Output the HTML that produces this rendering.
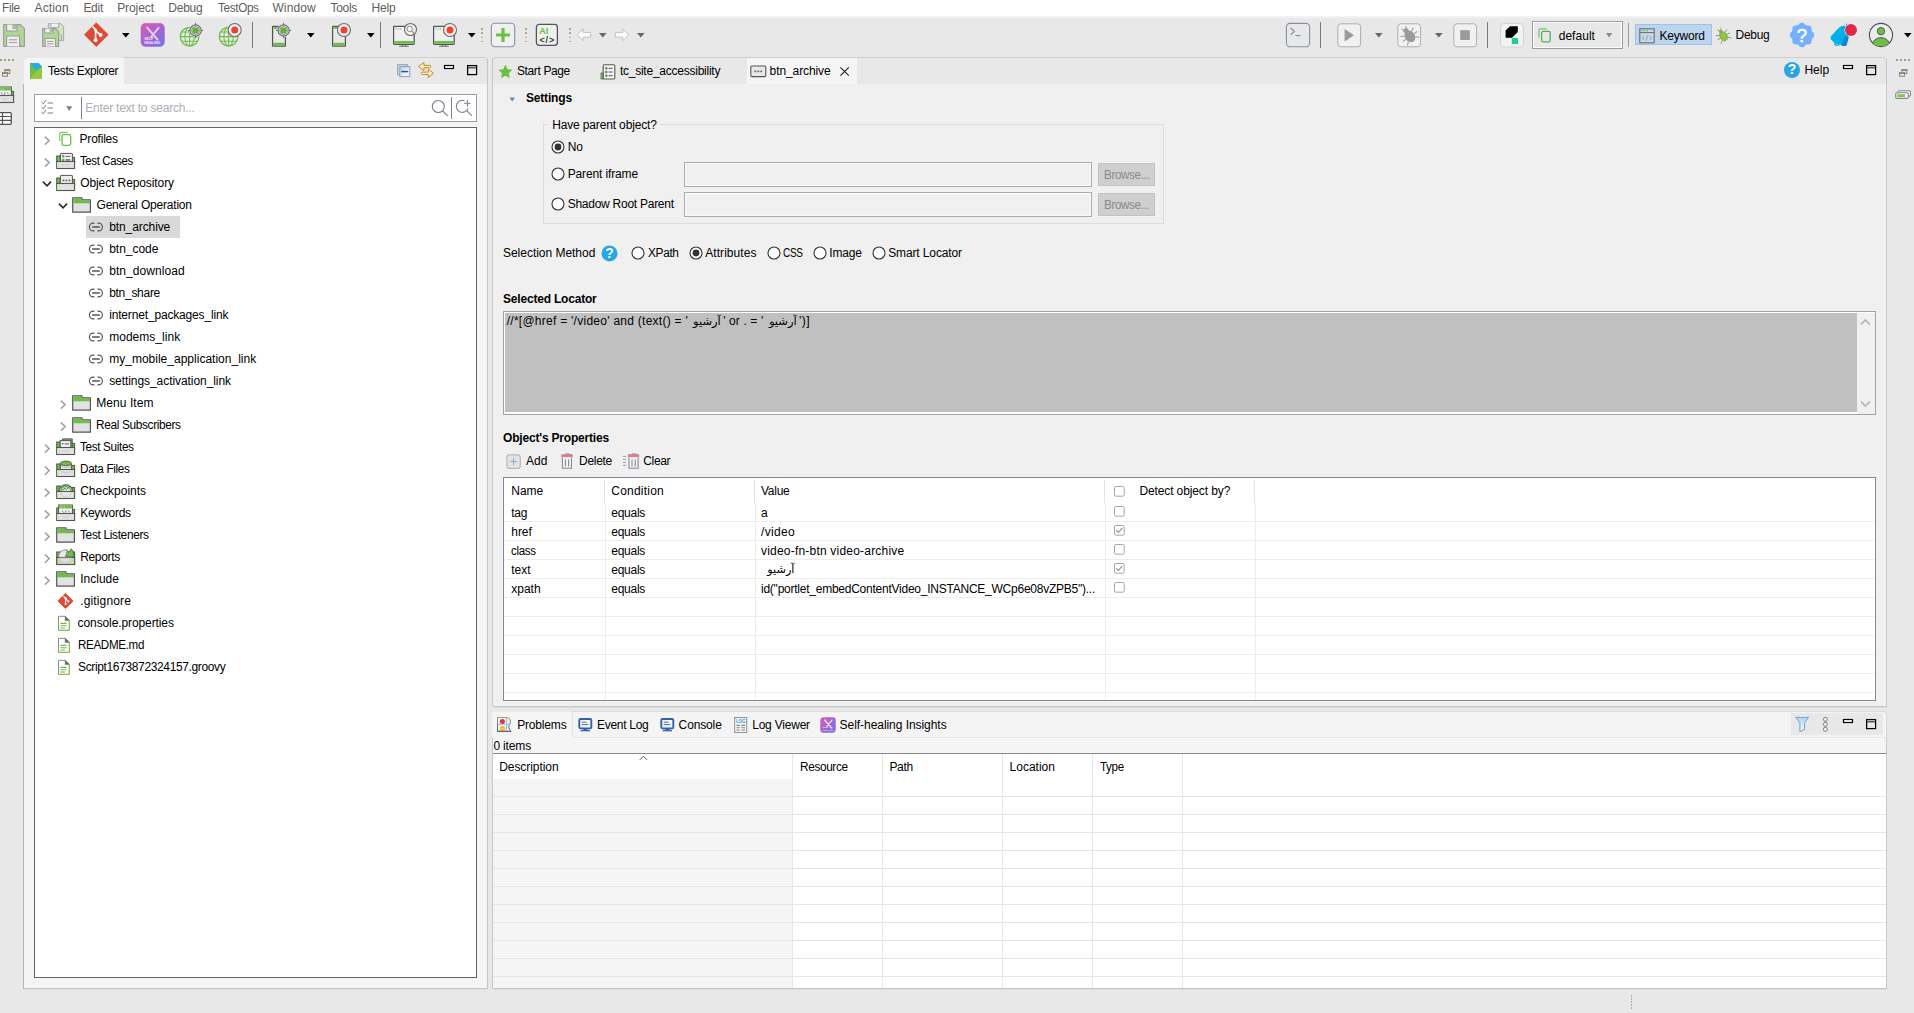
<!DOCTYPE html>
<html lang="en">
<head>
<meta charset="utf-8">
<title>Katalon Studio - btn_archive</title>
<style>
html,body{margin:0;padding:0}
body{width:1914px;height:1013px;overflow:hidden;position:relative;background:#e8e8e8;
 font-family:"Liberation Sans","DejaVu Sans",sans-serif;font-size:12px;color:#000}
nav,header,aside,main,section,.grp{position:absolute;left:0;top:0;width:0;height:0}
div,svg,span{position:absolute;box-sizing:border-box}
svg{overflow:visible}
.t{transform-origin:0 0;white-space:pre;line-height:14px;height:14px;font-size:12px;color:#000}
.b{font-weight:bold}
.m{color:#5e5e5e}
.ph{color:#b1abb5}
.dis{color:#8a8a8a}
.ar{font-family:"DejaVu Sans","Liberation Sans",sans-serif;font-size:11px}
svg text{font-family:"Liberation Sans",sans-serif}

</style>
</head>
<body>
<nav id="menubar" aria-label="Main menu">
<div style="left:0px;top:0px;width:1914px;height:16px;background:#fff"></div>
<div style="left:0px;top:16px;width:1914px;height:3px;background:linear-gradient(#f6f6f6,#e8e8e8)"></div>
<span id="t0" class="t m" style="left:2.3px;top:1px;letter-spacing:-0.35px;transform:scaleX(0.9864);">File</span>
<span id="t1" class="t m" style="left:34.5px;top:1px;letter-spacing:0.140px;">Action</span>
<span id="t2" class="t m" style="left:83.4px;top:1px;letter-spacing:-0.272px;">Edit</span>
<span id="t3" class="t m" style="left:117.2px;top:1px;letter-spacing:-0.080px;">Project</span>
<span id="t4" class="t m" style="left:168.3px;top:1px;letter-spacing:-0.235px;">Debug</span>
<span id="t5" class="t m" style="left:217.6px;top:1px;letter-spacing:-0.35px;transform:scaleX(0.9768);">TestOps</span>
<span id="t6" class="t m" style="left:272.4px;top:1px;letter-spacing:0.135px;">Window</span>
<span id="t7" class="t m" style="left:330.5px;top:1px;letter-spacing:-0.323px;">Tools</span>
<span id="t8" class="t m" style="left:371.4px;top:1px;letter-spacing:-0.097px;">Help</span>
</nav>
<header id="toolbar">
<svg style="left:3px;top:23px" width="22" height="24" viewBox="0 0 22 24" ><path d="M0.7 1.6 H17.4 L21.4 5.4 V23.4 H0.7 Z" fill="#b0d894" stroke="#9a9a9a" stroke-width="1.1" stroke-linejoin="round"/><path d="M3.6 1.6 V8 H14 V1.6" fill="#efefef" stroke="#9a9a9a" stroke-width="1.1"/><rect x="10" y="1.8" width="3" height="3.6" fill="#b0d894" stroke="#9a9a9a" stroke-width=".8"/><path d="M3.6 23.4 V13 H16.6 V23.4" fill="#efefef" stroke="#9a9a9a" stroke-width="1.1"/><path d="M6 16.8 H14 M6 19.6 H14" stroke="#9a9a9a" stroke-width="1"/></svg>
<svg style="left:42px;top:23px" width="22" height="24" viewBox="0 0 22 24" ><path d="M6.4 0.6 H18.6 L21.6 3.6 V17.6 H6.4 Z" fill="#cfe4c0" stroke="#a8a8a8" stroke-width="1" stroke-linejoin="round"/><path d="M8.8 0.6 V4.6 H16.6 V0.6" fill="#f0f0f0" stroke="#a8a8a8" stroke-width="1"/><path d="M17.8 12 H19.4 V17.4" fill="none" stroke="#a8a8a8" stroke-width="1"/><path d="M0.7 5.6 H13.4 L16.6 8.6 V23.4 H0.7 Z" fill="#b0d894" stroke="#9a9a9a" stroke-width="1.1" stroke-linejoin="round"/><path d="M2.8 5.6 V10 H11.2 V5.6" fill="#efefef" stroke="#9a9a9a" stroke-width="1"/><rect x="8.2" y="5.8" width="2.2" height="2.6" fill="#b0d894" stroke="#9a9a9a" stroke-width=".7"/><path d="M3.2 23.4 V15.4 H13.4 V23.4" fill="#efefef" stroke="#9a9a9a" stroke-width="1"/><path d="M5 18.4 H11.4 M5 20.8 H11.4" stroke="#9a9a9a" stroke-width="1"/></svg>
<svg style="left:84px;top:22px" width="25" height="25" viewBox="0 0 25 25" ><path d="M12.3 1.3 L23.8 12.7 L12.3 24.2 L0.8 12.7 Z" fill="#de4c36" stroke="#de4c36" stroke-width="1.2" stroke-linejoin="round"/><path d="M8.6 4.6 L11.6 7.8 V18.4 M11.8 8.6 L16.4 13" fill="none" stroke="#fff" stroke-width="1.6"/><circle cx="11.6" cy="18.2" r="1.9" fill="#fff"/><circle cx="16.6" cy="13" r="1.9" fill="#fff"/><circle cx="11.6" cy="8.2" r="1.4" fill="#fff"/></svg>
<svg style="left:121.6px;top:33px" width="8" height="5" viewBox="0 0 8 5" ><path d="M0 0 H7.6 L3.8 4.4 Z" fill="#000"/></svg>
<svg style="left:140px;top:23px" width="25" height="24" viewBox="0 0 25 24" ><defs><linearGradient id="shg" x1="0" y1="0" x2="1" y2="1"><stop offset="0" stop-color="#d660b0"/><stop offset=".55" stop-color="#a064d4"/><stop offset="1" stop-color="#6f74ec"/></linearGradient></defs><rect x="0.7" y="0.3" width="24" height="23.4" rx="4.6" fill="url(#shg)"/><clipPath id="shc"><rect x="0.7" y="0.3" width="24" height="23.4" rx="4.6"/></clipPath><path d="M0.7 6 Q8 -1 24.7 3.4 V0.3 H0.7 Z" fill="#e05aa0" opacity=".5" clip-path="url(#shc)"/><path d="M7 4.4 L17.6 16.6 M18.6 4.8 L11 14" stroke="#f0e4f8" stroke-width="1.9" fill="none" stroke-linecap="round" opacity=".85"/><text x="4.2" y="16.6" font-size="3.6" font-weight="bold" fill="#f3e3f8">SELF</text><text x="4.2" y="20.6" font-size="3.6" font-weight="bold" fill="#f3e3f8">HEALING</text></svg>
<svg style="left:179px;top:23px" width="24" height="24" viewBox="0 0 24 24" ><g fill="none" stroke="#6cbe45" stroke-width="1.05"><circle cx="10.6" cy="13.6" r="9.3" stroke-width="1.3"/><ellipse cx="10.6" cy="13.6" rx="4.7" ry="9.3"/><path d="M10.6 4.3 V22.9 M1.3 13.6 H19.9 M2.5 9 H18.7 M2.5 18.2 H18.7"/></g><circle cx="16.6" cy="7.5" r="6.6" fill="#e8e8e8"/><path d="M16.6 -0.09999999999999964 V15.1 M9.000000000000002 7.5 H24.200000000000003" stroke="#6b6b6b" stroke-width="1"/><circle cx="16.6" cy="7.5" r="5.6" fill="#e4e4e4" stroke="#6b6b6b" stroke-width="1.1"/><circle cx="16.6" cy="7.5" r="3.9" fill="none" stroke="#6b6b6b" stroke-width=".7"/><circle cx="16.6" cy="7.5" r="3.1" fill="#62b534"/></svg>
<svg style="left:218px;top:23px" width="24" height="24" viewBox="0 0 24 24" ><g fill="none" stroke="#6cbe45" stroke-width="1.05"><circle cx="10.6" cy="13.6" r="9.3" stroke-width="1.3"/><ellipse cx="10.6" cy="13.6" rx="4.7" ry="9.3"/><path d="M10.6 4.3 V22.9 M1.3 13.6 H19.9 M2.5 9 H18.7 M2.5 18.2 H18.7"/></g><circle cx="16.7" cy="7" r="6.5" fill="#f2f2f2" stroke="#6b6b6b" stroke-width="1.1"/><circle cx="16.7" cy="7" r="3.5" fill="#f43f33"/></svg>
<div style="left:252px;top:22px;width:1px;height:26px;background:#7a7a7a"></div>
<svg style="left:271px;top:23px" width="20" height="24" viewBox="0 0 20 24" ><rect x="1.6" y="3.3" width="12.8" height="19.8" rx="0.3" fill="#e9e9e9" stroke="#555" stroke-width="1.25"/><rect x="2.3" y="3.9" width="7" height="2" fill="#6cbe45"/><rect x="2.3" y="19.8" width="11.4" height="2.6" fill="#6cbe45"/><circle cx="12.6" cy="7.5" r="6.6" fill="#e8e8e8"/><path d="M12.6 -0.09999999999999964 V15.1 M5.0 7.5 H20.2" stroke="#6b6b6b" stroke-width="1"/><circle cx="12.6" cy="7.5" r="5.6" fill="#e4e4e4" stroke="#6b6b6b" stroke-width="1.1"/><circle cx="12.6" cy="7.5" r="3.9" fill="none" stroke="#6b6b6b" stroke-width=".7"/><circle cx="12.6" cy="7.5" r="3.1" fill="#62b534"/></svg>
<svg style="left:306.8px;top:33px" width="8" height="5" viewBox="0 0 8 5" ><path d="M0 0 H7.6 L3.8 4.4 Z" fill="#000"/></svg>
<svg style="left:331px;top:23px" width="20" height="24" viewBox="0 0 20 24" ><rect x="1.6" y="3.3" width="12.8" height="19.8" rx="0.3" fill="#e9e9e9" stroke="#555" stroke-width="1.25"/><rect x="2.3" y="3.9" width="7" height="2" fill="#6cbe45"/><rect x="2.3" y="19.8" width="11.4" height="2.6" fill="#6cbe45"/><circle cx="13" cy="7" r="6.5" fill="#f2f2f2" stroke="#6b6b6b" stroke-width="1.1"/><circle cx="13" cy="7" r="3.5" fill="#f43f33"/></svg>
<svg style="left:366.6px;top:33px" width="8" height="5" viewBox="0 0 8 5" ><path d="M0 0 H7.6 L3.8 4.4 Z" fill="#000"/></svg>
<div style="left:380px;top:22px;width:1px;height:26px;background:#7a7a7a"></div>
<svg style="left:392px;top:23px" width="24" height="24" viewBox="0 0 24 24" ><rect x="1.6" y="3.3" width="20.6" height="18" rx="0.5" fill="#f0f0f0" stroke="#555" stroke-width="1.25"/><rect x="2.3" y="18" width="19.2" height="2.7" fill="#6cbe45"/><rect x="3.4" y="5.4" width="1.2" height="1" fill="#6cbe45"/><rect x="5.6" y="5.4" width="1.2" height="1" fill="#6cbe45"/><rect x="7.8" y="5.4" width="1.2" height="1" fill="#6cbe45"/><path d="M10.4 21.6 V23 M13.4 21.6 V23 M7.2 23.3 H16.6" stroke="#666" stroke-width="1.1" fill="none"/><circle cx="18.5" cy="6.5" r="6" fill="#f2f2f2" stroke="#6b6b6b" stroke-width="1.1"/><circle cx="17.7" cy="5.9" r="2.7" fill="#fafafa" stroke="#8a8a8a" stroke-width="1"/><path d="M19.7 8.1 L22.1 10.5" stroke="#8a8a8a" stroke-width="1.1"/></svg>
<svg style="left:432px;top:23px" width="24" height="24" viewBox="0 0 24 24" ><rect x="1.6" y="3.3" width="20.6" height="18" rx="0.5" fill="#f0f0f0" stroke="#555" stroke-width="1.25"/><rect x="2.3" y="18" width="19.2" height="2.7" fill="#6cbe45"/><rect x="3.4" y="5.4" width="1.2" height="1" fill="#6cbe45"/><rect x="5.6" y="5.4" width="1.2" height="1" fill="#6cbe45"/><rect x="7.8" y="5.4" width="1.2" height="1" fill="#6cbe45"/><path d="M10.4 21.6 V23 M13.4 21.6 V23 M7.2 23.3 H16.6" stroke="#666" stroke-width="1.1" fill="none"/><circle cx="18" cy="7" r="6.5" fill="#f2f2f2" stroke="#6b6b6b" stroke-width="1.1"/><circle cx="18" cy="7" r="3.5" fill="#f43f33"/></svg>
<svg style="left:467.6px;top:33px" width="8" height="5" viewBox="0 0 8 5" ><path d="M0 0 H7.6 L3.8 4.4 Z" fill="#000"/></svg>
<div style="left:481px;top:28.4px;width:1.6px;height:1.8px;background:#b3a68b"></div>
<div style="left:481px;top:32.449999999999996px;width:1.6px;height:1.8px;background:#b3a68b"></div>
<div style="left:481px;top:36.5px;width:1.6px;height:1.8px;background:#b3a68b"></div>
<div style="left:481px;top:40.55px;width:1.6px;height:1.8px;background:#b3a68b"></div>
<svg style="left:490px;top:22px" width="26" height="26" viewBox="0 0 26 26" ><rect x="1.3" y="1.3" width="23.4" height="23.4" rx="3.6" fill="#f0f0f0" stroke="#8491a5" stroke-width="1.1"/><path d="M13 6 V20 M6 13 H20" stroke="#6cbe45" stroke-width="3.2"/></svg>
<div style="left:525px;top:28.4px;width:1.6px;height:1.8px;background:#b3a68b"></div>
<div style="left:525px;top:32.449999999999996px;width:1.6px;height:1.8px;background:#b3a68b"></div>
<div style="left:525px;top:36.5px;width:1.6px;height:1.8px;background:#b3a68b"></div>
<div style="left:525px;top:40.55px;width:1.6px;height:1.8px;background:#b3a68b"></div>
<svg style="left:535px;top:23px" width="24" height="24" viewBox="0 0 24 24" ><rect x="1.4" y="1.4" width="21" height="21" rx="2.8" fill="#efefef" stroke="#555" stroke-width="1.3"/><text x="4.2" y="10.6" font-size="9" font-weight="bold" fill="#6cbe45">AI</text><text x="4.4" y="19.9" font-size="9" font-weight="bold" fill="#3c3c3c" textLength="14.8" lengthAdjust="spacing">&lt;/&gt;</text></svg>
<div style="left:569px;top:28.4px;width:1.6px;height:1.8px;background:#b3a68b"></div>
<div style="left:569px;top:32.449999999999996px;width:1.6px;height:1.8px;background:#b3a68b"></div>
<div style="left:569px;top:36.5px;width:1.6px;height:1.8px;background:#b3a68b"></div>
<div style="left:569px;top:40.55px;width:1.6px;height:1.8px;background:#b3a68b"></div>
<svg style="left:576px;top:28px" width="16" height="14" viewBox="0 0 16 14" ><path d="M7.2 1 L1 6.8 L7.2 12.6 V9.2 H14.6 V4.4 H7.2 Z" fill="#fbfbfb" stroke="#c2c2c2" stroke-width="1" stroke-linejoin="round"/></svg>
<svg style="left:599px;top:33px" width="8" height="5" viewBox="0 0 8 5" ><path d="M0 0 H7.6 L3.8 4.4 Z" fill="#666"/></svg>
<svg style="left:614px;top:28px" width="16" height="14" viewBox="0 0 16 14" ><path d="M8.8 1 L15 6.8 L8.8 12.6 V9.2 H1.4 V4.4 H8.8 Z" fill="#fbfbfb" stroke="#c2c2c2" stroke-width="1" stroke-linejoin="round"/></svg>
<svg style="left:637px;top:33px" width="8" height="5" viewBox="0 0 8 5" ><path d="M0 0 H7.6 L3.8 4.4 Z" fill="#666"/></svg>
<svg style="left:1285px;top:22px" width="26" height="26" viewBox="0 0 26 26" ><rect x="1.4" y="1.4" width="23.2" height="23.4" rx="3.6" fill="none" stroke="#8792a6" stroke-width="1.1"/><path d="M5.6 6 L9.4 9.4 L5.6 12.8" fill="none" stroke="#7d8aa0" stroke-width="1.1"/><path d="M10.4 13.6 H15.4" stroke="#7d8aa0" stroke-width="1.1"/></svg>
<div style="left:1320px;top:22px;width:1px;height:26px;background:#7a7a7a"></div>
<svg style="left:1337px;top:23px" width="25" height="25" viewBox="0 0 25 25" ><rect x="0.8" y="0.8" width="22.8" height="23" rx="3" fill="#f1f1f1" stroke="#aeaeae" stroke-width="1"/><path d="M7.6 6 L17 12.3 L7.6 18.6 Z" fill="#9a9a9a"/></svg>
<svg style="left:1374.7px;top:33px" width="8" height="5" viewBox="0 0 8 5" ><path d="M0 0 H7.6 L3.8 4.4 Z" fill="#666"/></svg>
<svg style="left:1397px;top:23px" width="25" height="25" viewBox="0 0 25 25" ><rect x="0.8" y="0.8" width="22.8" height="23" rx="3" fill="#f1f1f1" stroke="#aeaeae" stroke-width="1"/><g transform="rotate(-35 12.2 12.4)"><ellipse cx="12.2" cy="13.6" rx="5" ry="6.3" fill="#9a9a9a"/><circle cx="12.2" cy="6.8" r="2.6" fill="#9a9a9a"/><path d="M7.8 10.4 L4.6 8.4 M7.2 13.8 H3.4 M7.8 17.2 L5 19.6 M16.6 10.4 L19.8 8.4 M17.2 13.8 H21 M16.6 17.2 L19.4 19.6 M10.8 5 L9.6 2.8 M13.6 5 L14.8 2.8" stroke="#9a9a9a" stroke-width="1" fill="none"/></g></svg>
<svg style="left:1434.6px;top:33px" width="8" height="5" viewBox="0 0 8 5" ><path d="M0 0 H7.6 L3.8 4.4 Z" fill="#666"/></svg>
<svg style="left:1453px;top:23px" width="25" height="25" viewBox="0 0 25 25" ><rect x="0.8" y="0.8" width="22.8" height="23" rx="3" fill="#f1f1f1" stroke="#aeaeae" stroke-width="1"/><rect x="7.2" y="7.2" width="9.6" height="9.8" fill="#9a9a9a"/></svg>
<div style="left:1487px;top:22px;width:1px;height:26px;background:#7a7a7a"></div>
<svg style="left:1500px;top:23px" width="24" height="25" viewBox="0 0 24 25" ><rect x="0.6" y="0.6" width="22.8" height="23.4" rx="3.4" fill="#f3f3f3" stroke="#d2d2d2" stroke-width="1"/><path d="M10 3.2 H17.8 V9 L12 14.8 H5.6 V7.6 Z" fill="#000"/><rect x="11.8" y="15" width="6.2" height="6" fill="#1ccf93"/></svg>
<div style="left:1532px;top:21px;width:91px;height:28px;background:#e8e8e8;border:1px solid #9d9d9d;box-shadow:inset 0 0 0 1px #fdfdfd"></div>
<svg style="left:1538px;top:28px" width="14" height="15" viewBox="0 0 14 15" ><path d="M1 9.6 V2.4 Q1 0.9 2.5 0.9 H8.6" fill="none" stroke="#6fbf73" stroke-width="1.2"/><rect x="3.6" y="3.4" width="8.6" height="10.4" rx="1.5" fill="#e8e8e8" stroke="#4fb257" stroke-width="1.3"/></svg>
<span id="t9" class="t" style="left:1558.7px;top:28.700000000000003px;letter-spacing:0.038px;">default</span>
<svg style="left:1606px;top:33px" width="7" height="5" viewBox="0 0 7 5" ><path d="M0 0 H6.2 L3.1 4.6 Z" fill="#858a92"/></svg>
<div style="left:1628px;top:23px;width:1px;height:24px;background:#9a9a9a"></div>
<div style="left:1635px;top:24px;width:77px;height:21px;background:#bcd5ec;border:1px solid #99c4ef"></div>
<svg style="left:1639px;top:28px" width="16" height="16" viewBox="0 0 16 16" ><rect x="0.8" y="0.8" width="14.4" height="14" fill="#c7d9ea" stroke="#6b6b6b" stroke-width="1.1"/><path d="M0.8 4.6 H15.2" stroke="#6b6b6b" stroke-width="1"/><rect x="2.2" y="2.2" width="1.6" height="1" fill="#6cbe45"/><rect x="4.8" y="2.2" width="1.6" height="1" fill="#6cbe45"/><rect x="7.4" y="2.2" width="1.6" height="1" fill="#6cbe45"/><path d="M5.4 7.8 L3.4 10 L5.4 12.2 M10.6 7.8 L12.6 10 L10.6 12.2 M8.8 7.4 L7.2 12.6" fill="none" stroke="#8d98a8" stroke-width=".9"/></svg>
<span id="t10" class="t" style="left:1659.5px;top:28.700000000000003px;letter-spacing:-0.212px;">Keyword</span>
<svg style="left:1715px;top:27px" width="16" height="16" viewBox="0 0 16 16" ><g transform="rotate(-30 8 8.4)"><ellipse cx="8" cy="9.4" rx="3.5" ry="4.9" fill="#8dc63f" stroke="#6f9a2e" stroke-width=".7"/><circle cx="8" cy="3.9" r="1.7" fill="#7fb437"/><path d="M4.6 6.8 L1.6 4.8 M4.4 9.6 H0.8 M4.8 12.4 L2 14.8 M11.4 6.8 L14.4 4.8 M11.6 9.6 H15.2 M11.2 12.4 L14 14.8 M7 2.6 L6 0.6 M9 2.6 L10 0.6" stroke="#8f9a86" stroke-width=".9" fill="none"/></g></svg>
<span id="t11" class="t" style="left:1735.6px;top:27.9px;letter-spacing:-0.295px;">Debug</span>
<svg style="left:1789px;top:22px" width="26" height="26" viewBox="0 0 26 26" ><circle cx="13" cy="13" r="10.7" fill="#74b0fb"/><circle cx="21.90" cy="13.00" r="3.3" fill="#74b0fb"/><circle cx="19.29" cy="19.29" r="3.3" fill="#74b0fb"/><circle cx="13.00" cy="21.90" r="3.3" fill="#74b0fb"/><circle cx="6.71" cy="19.29" r="3.3" fill="#74b0fb"/><circle cx="4.10" cy="13.00" r="3.3" fill="#74b0fb"/><circle cx="6.71" cy="6.71" r="3.3" fill="#74b0fb"/><circle cx="13.00" cy="4.10" r="3.3" fill="#74b0fb"/><circle cx="19.29" cy="6.71" r="3.3" fill="#74b0fb"/><text x="13" y="20.1" text-anchor="middle" font-size="18.5" fill="#fff" stroke="#fff" stroke-width=".55">?</text></svg>
<svg style="left:1829px;top:22px" width="30" height="26" viewBox="0 0 30 26" ><path d="M16.8 2.4 L17.7 1.2 L18.6 2.2 L17.8 4.2 Q20 8.4 19.6 15.2 L17.7 22.8 Q16.2 24.6 13.6 23.7 L11.2 22.5 Q9.2 24.9 6.5 23.7 Q4.3 22.5 5 20.3 L2.1 17.7 Q0.7 15.9 2.2 14 L10.2 5.6 Q13 3 16.6 4.1 Z" fill="#00aeea"/><path d="M15.7 13.8 L19.6 15.2 L17.7 22.8 Q16.2 24.6 13.6 23.7 L12.2 23 Z" fill="#0089cf"/><path d="M6.2 21.4 Q7.4 23.2 9.6 22.8" fill="none" stroke="#8fdcf8" stroke-width=".9"/><circle cx="22" cy="7.9" r="6.6" fill="#eef6f6"/><circle cx="22" cy="7.9" r="6" fill="#de2a48"/></svg>
<svg style="left:1868px;top:22px" width="26" height="26" viewBox="0 0 26 26" ><defs><clipPath id="avc"><circle cx="13" cy="13" r="11.2"/></clipPath></defs><circle cx="13" cy="13" r="11.6" fill="#ececec" stroke="#4e4e4e" stroke-width="1.1"/><circle cx="13" cy="9.2" r="3.7" fill="#6cbe45" stroke="#4e4e4e" stroke-width=".9"/><ellipse cx="13" cy="23" rx="8.6" ry="7.4" fill="#6cbe45" stroke="#4e4e4e" stroke-width=".9" clip-path="url(#avc)"/></svg>
<svg style="left:1904px;top:33px" width="8" height="5" viewBox="0 0 8 5" ><path d="M0 0 H7.6 L3.8 4.4 Z" fill="#000"/></svg>
</header>
<div id="trim" class="grp">
<div style="left:0px;top:59px;width:2px;height:2px;background:#a8997c"></div>
<div style="left:1896px;top:59px;width:2px;height:2px;background:#a8997c"></div>
<div style="left:4px;top:59px;width:2px;height:2px;background:#a8997c"></div>
<div style="left:1900px;top:59px;width:2px;height:2px;background:#a8997c"></div>
<div style="left:8px;top:59px;width:2px;height:2px;background:#a8997c"></div>
<div style="left:1904px;top:59px;width:2px;height:2px;background:#a8997c"></div>
<div style="left:12px;top:59px;width:2px;height:2px;background:#a8997c"></div>
<div style="left:1908px;top:59px;width:2px;height:2px;background:#a8997c"></div>
<svg style="left:2px;top:69px" width="10" height="9" viewBox="0 0 10 9" ><rect x="2.9" y="0.9" width="4.9" height="3.6" fill="none" stroke="#8f8576" stroke-width="1"/><rect x="2.4" y="0.2" width="5.9" height="1.7" fill="#8f8576"/><rect x="0.6" y="3.8" width="4.9" height="3.4" fill="#e8e8e8" stroke="#8f8576" stroke-width="1"/><rect x="0.1" y="3.2" width="5.9" height="1.7" fill="#8f8576"/></svg>
<svg style="left:1898.8px;top:69px" width="10" height="9" viewBox="0 0 10 9" ><rect x="2.9" y="0.9" width="4.9" height="3.6" fill="none" stroke="#8f8576" stroke-width="1"/><rect x="2.4" y="0.2" width="5.9" height="1.7" fill="#8f8576"/><rect x="0.6" y="3.8" width="4.9" height="3.4" fill="#e8e8e8" stroke="#8f8576" stroke-width="1"/><rect x="0.1" y="3.2" width="5.9" height="1.7" fill="#8f8576"/></svg>
<svg style="left:-5px;top:85.9px" width="20" height="18" viewBox="0 0 20 18" ><rect x="0.7" y="4" width="3.6" height="6" fill="#6cbe45" stroke="#555555" stroke-width="1"/><rect x="15.6" y="5.4" width="3" height="5" fill="#6cbe45" stroke="#555555" stroke-width="1"/><rect x="2.6" y="1" width="13.8" height="9" fill="#f4f4f4" stroke="#555555" stroke-width="1"/><rect x="3.1" y="1.5" width="12.8" height="3" fill="#6cbe45"/><rect x="4.4" y="2.6" width="1" height="0.9" fill="#d8f0c8"/><rect x="6.2" y="2.6" width="1" height="0.9" fill="#d8f0c8"/><rect x="8" y="2.6" width="1" height="0.9" fill="#d8f0c8"/><path d="M6 6.5 L7.4 8.4 M9.2 8.6 L10.2 6.4 M12.2 6.5 L13.6 8.4" stroke="#555555" stroke-width=".8" fill="none"/><rect x="0.7" y="9.5" width="17.9" height="7" fill="#e2e2e2" stroke="#555555" stroke-width="1.1"/><rect x="1.3" y="10.1" width="2.2" height="5.8" fill="#cfe6bf"/><rect x="16.6" y="10.1" width="1.4" height="5.8" fill="#cfe6bf"/><path d="M7 11.4 L8.6 13.6 M9.6 14.4 L10.4 11.6 M13 11.4 L11.4 13.6" stroke="#c8c8c8" stroke-width=".8" fill="none"/></svg>
<svg style="left:0px;top:112px" width="13" height="13" viewBox="0 0 13 13" ><rect x="-1" y="0.7" width="12.3" height="11.6" rx="1" fill="#fff" stroke="#555" stroke-width="1.3"/><path d="M-1 4.5 H11.3 M-1 8.4 H11.3 M2.5 0.7 V12.3" stroke="#555" stroke-width="1.2"/></svg>
<svg style="left:1895px;top:90px" width="17" height="10" viewBox="0 0 17 10" ><rect x="2.9" y="0.7" width="12.6" height="5.4" rx="1.2" fill="#efefef" stroke="#7e889b" stroke-width="1.1"/><rect x="0.7" y="2.8" width="12.6" height="5.6" rx="1.2" fill="#f6f6f6" stroke="#7e889b" stroke-width="1.1"/><rect x="2.2" y="4.2" width="7.8" height="2.8" fill="#8cc63e"/></svg>
<div style="left:1631px;top:995px;width:1px;height:2px;background:#b8ad98"></div>
<div style="left:1631px;top:998px;width:1px;height:2px;background:#b8ad98"></div>
<div style="left:1631px;top:1001px;width:1px;height:2px;background:#b8ad98"></div>
<div style="left:1631px;top:1004px;width:1px;height:2px;background:#b8ad98"></div>
<div style="left:1631px;top:1007px;width:1px;height:2px;background:#b8ad98"></div>
</div>
<aside id="tests-explorer">
<div style="left:24px;top:58px;width:464px;height:931px;background:#f5f5f5;border-radius:4px 4px 0 0"></div>
<div style="left:124px;top:57px;width:364px;height:27px;background:#e8e8e8;border-top:1px solid #cecece;border-right:1px solid #c6c6c6;border-radius:0 4px 0 0"></div>
<div style="left:23px;top:84px;width:1px;height:905px;background:#b4b4b4"></div>
<div style="left:487px;top:84px;width:1px;height:905px;background:#c6c6c6"></div>
<div style="left:24px;top:988px;width:464px;height:1px;background:#c6c6c6"></div>
<div style="left:25px;top:989px;width:463px;height:1px;background:#e0e0e0"></div>
<svg style="left:30px;top:63px" width="12" height="16" viewBox="0 0 12 16" ><path d="M0 0 H8.5 L12 3.5 V16 H0 Z" fill="#8dc63f"/><path d="M0 0 L6 8 L0 16 Z" fill="#6cbe45"/><path d="M0 0 H8.5 L12 3.5 L6 8 Z" fill="#27a9e1"/><path d="M0 16 L12 3.5 V16 Z" fill="#a0cc3a" opacity=".55"/></svg>
<span id="t12" class="t" style="left:48.3px;top:64px;letter-spacing:-0.35px;transform:scaleX(0.9869);">Tests Explorer</span>
<svg style="left:397px;top:64px" width="14" height="13" viewBox="0 0 14 13" ><defs><linearGradient id="cag" x1="0" y1="0" x2="1" y2="1"><stop offset="0" stop-color="#b4cfd6"/><stop offset=".7" stop-color="#eef4f6"/><stop offset="1" stop-color="#ffffff"/></linearGradient></defs><rect x="0.6" y="0.6" width="10" height="10" fill="#c9dbe0" stroke="#93a3bf" stroke-width="1"/><rect x="2.8" y="2.6" width="10" height="10" fill="url(#cag)" stroke="#8c9cba" stroke-width="1"/><rect x="4.2" y="6.9" width="7" height="1.4" fill="#1c5c9c"/></svg>
<svg style="left:418px;top:62px" width="16" height="16" viewBox="0 0 16 16" ><defs><linearGradient id="lag" x1="0" y1="0" x2="0" y2="1"><stop offset="0" stop-color="#fffbe6"/><stop offset="1" stop-color="#fbe29a"/></linearGradient></defs><path d="M5.9 0.5 L0.5 4.6 L5.9 8.7 V5.8 H11.6 Q12.8 5.8 12.8 4.6 Q12.8 3.4 11.6 3.4 H5.9 Z" fill="url(#lag)" stroke="#c58a26" stroke-width="1" stroke-linejoin="round"/><path d="M10.3 7.2 L15.6 11.3 L10.3 15.5 V12.5 H4.6 Q3.4 12.5 3.4 11.3 Q3.4 10.1 4.6 10.1 H10.3 Z" fill="url(#lag)" stroke="#c58a26" stroke-width="1" stroke-linejoin="round"/></svg>
<svg style="left:443px;top:64px" width="12" height="6" viewBox="0 0 12 6" ><rect x="1.5" y="1.5" width="9" height="3" fill="#fff" stroke="#000" stroke-width="1.2"/></svg>
<svg style="left:466px;top:64px" width="12" height="12" viewBox="0 0 12 12" ><rect x="1.6" y="1.6" width="9" height="9" fill="none" stroke="#000" stroke-width="1.25"/><rect x="1.6" y="3.4" width="9" height="0.9" fill="#000"/></svg>
<div style="left:34px;top:94px;width:443px;height:28px;background:#fff;border:1px solid #989ea7"></div>
<svg style="left:41px;top:100.4px" width="12" height="14" viewBox="0 0 12 14" ><path d="M0.3 2.0 L2.3 3.8 L5 0.0" fill="none" stroke="#7b838e" stroke-width="1"/><path d="M6.5 3.0 H12" stroke="#7b838e" stroke-width="1"/><path d="M0.3 7.0 L2.3 8.8 L5 5.0" fill="none" stroke="#7b838e" stroke-width="1"/><path d="M6.5 8.0 H12" stroke="#7b838e" stroke-width="1"/><path d="M0.3 12.0 L2.3 13.8 L5 10.0" fill="none" stroke="#7b838e" stroke-width="1"/><path d="M6.5 13.0 H12" stroke="#7b838e" stroke-width="1"/></svg>
<svg style="left:66px;top:106px" width="7" height="6" viewBox="0 0 7 6" ><path d="M0.2 0.3 H6.2 L3.2 5 Z" fill="#7a8088"/></svg>
<div style="left:81px;top:97px;width:1px;height:22px;background:#7d848e"></div>
<span id="t13" class="t ph" style="left:85.3px;top:101px;letter-spacing:-0.207px;">Enter text to search...</span>
<svg style="left:431px;top:100px" width="17" height="17" viewBox="0 0 17 17" ><circle cx="7.3" cy="6.5" r="6" fill="none" stroke="#7b838e" stroke-width="1.1"/><path d="M11.7 10.9 L16.6 15.8" stroke="#7b838e" stroke-width="1.2"/></svg>
<div style="left:451px;top:97px;width:1px;height:22px;background:#7d848e"></div>
<svg style="left:455px;top:99px" width="18" height="18" viewBox="0 0 18 18" ><path d="M9.6 1.8 A6 6 0 1 0 13 9.4" fill="none" stroke="#7b838e" stroke-width="1.1"/><path d="M11.8 11.6 L16.9 16.8" stroke="#7b838e" stroke-width="1.2"/><path d="M12.4 0.9 V7.7 M9 4.3 H15.8" stroke="#7b838e" stroke-width="1.1"/></svg>
<div style="left:34px;top:127px;width:443px;height:851px;background:#fff;border:1px solid #646464"></div>
<div style="left:86px;top:216px;width:94px;height:22px;background:#d9d9d9"></div>
<svg style="left:43.5px;top:136px" width="7" height="10" viewBox="0 0 7 10" ><path d="M0.9 0.6 L5.2 4.6 L0.9 8.6" fill="none" stroke="#a3a3a3" stroke-width="1.5"/></svg>
<svg style="left:58px;top:130px" width="20" height="18" viewBox="0 0 20 18" ><path d="M1.7 11 V3.8 Q1.7 2.4 3.1 2.4 H9.9" fill="none" stroke="#6cbe45" stroke-width="1.2" opacity=".8"/><rect x="4" y="4.7" width="8.7" height="10.6" rx="1.5" fill="#fff" stroke="#6cbe45" stroke-width="1.3"/></svg>
<span id="t14" class="t" style="left:79.6px;top:132px;letter-spacing:-0.227px;">Profiles</span>
<svg style="left:43.5px;top:158px" width="7" height="10" viewBox="0 0 7 10" ><path d="M0.9 0.6 L5.2 4.6 L0.9 8.6" fill="none" stroke="#a3a3a3" stroke-width="1.5"/></svg>
<svg style="left:56px;top:152px" width="20" height="18" viewBox="0 0 20 18" ><rect x="0.7" y="4" width="3.6" height="6" fill="#6cbe45" stroke="#555555" stroke-width="1"/><rect x="15.6" y="5.4" width="3" height="5" fill="#6cbe45" stroke="#555555" stroke-width="1"/><path d="M4.4 10 V1.9 Q4.4 1.4 5 1.4 H15.8 Q16.4 1.4 16.4 1.9 V10 Z" fill="#f0f0f0" stroke="#555555" stroke-width="1"/><circle cx="7.2" cy="4.3" r="1" fill="#6cbe45" stroke="#555555" stroke-width=".5"/><rect x="9.6" y="3.9" width="4.6" height="0.9" fill="#555555"/><circle cx="7.2" cy="8" r="1" fill="#6cbe45" stroke="#555555" stroke-width=".5"/><rect x="9.6" y="7.3" width="4.6" height="1.3" fill="#555555"/><rect x="0.7" y="9.5" width="17.9" height="7" fill="#e2e2e2" stroke="#555555" stroke-width="1.1"/><rect x="1.3" y="10.1" width="2.2" height="5.8" fill="#cfe6bf"/><rect x="16.6" y="10.1" width="1.4" height="5.8" fill="#cfe6bf"/><circle cx="7.2" cy="12.8" r="0.9" fill="none" stroke="#c4c4c4" stroke-width=".7"/><rect x="9.8" y="12.4" width="4.4" height="0.8" fill="#c8c8c8"/></svg>
<span id="t15" class="t" style="left:80.2px;top:154px;letter-spacing:-0.35px;transform:scaleX(0.9452);">Test Cases</span>
<svg style="left:41.5px;top:180px" width="10" height="8" viewBox="0 0 10 8" ><path d="M0.9 1.6 L5 5.9 L9.1 1.6" fill="none" stroke="#2b2b2b" stroke-width="1.6"/></svg>
<svg style="left:56px;top:174px" width="20" height="18" viewBox="0 0 20 18" ><rect x="0.7" y="4" width="3.6" height="6" fill="#6cbe45" stroke="#555555" stroke-width="1"/><rect x="15.6" y="5.4" width="3" height="5" fill="#6cbe45" stroke="#555555" stroke-width="1"/><path d="M4.4 10 V1.9 Q4.4 1.4 5 1.4 H15.8 Q16.4 1.4 16.4 1.9 V10 Z" fill="#eeeeee" stroke="#555555" stroke-width="1"/><rect x="6.4" y="5.6" width="1.9" height="1.7" fill="#6a6a6a"/><rect x="9.4" y="5.6" width="1.9" height="1.7" fill="#6a6a6a"/><rect x="12.4" y="5.6" width="1.9" height="1.7" fill="#6a6a6a"/><rect x="0.7" y="9.5" width="17.9" height="7" fill="#e2e2e2" stroke="#555555" stroke-width="1.1"/><rect x="1.3" y="10.1" width="2.2" height="5.8" fill="#cfe6bf"/><rect x="16.6" y="10.1" width="1.4" height="5.8" fill="#cfe6bf"/></svg>
<span id="t16" class="t" style="left:80.2px;top:176px;letter-spacing:-0.093px;">Object Repository</span>
<svg style="left:57.5px;top:202px" width="10" height="8" viewBox="0 0 10 8" ><path d="M0.9 1.6 L5 5.9 L9.1 1.6" fill="none" stroke="#2b2b2b" stroke-width="1.6"/></svg>
<svg style="left:72px;top:196px" width="20" height="18" viewBox="0 0 20 18" ><path d="M0.7 16.2 V1.8 H10 V3.8 H18.4 V16.2 Z" fill="#e2e2e2" stroke="#555555" stroke-width="1.2" stroke-linejoin="round"/><path d="M1.3 2.4 H9.4 V4.4 H17.8 V7.3 H1.3 Z" fill="#6cbe45"/></svg>
<span id="t17" class="t" style="left:96.5px;top:198px;letter-spacing:-0.202px;">General Operation</span>
<svg style="left:88px;top:218px" width="20" height="18" viewBox="0 0 20 18" ><path d="M6.5 5.1 H5.3 A3.9 3.9 0 0 0 5.3 12.9 H6.5" fill="none" stroke="#555555" stroke-width="1.2"/><path d="M9.4 5.1 H10.5 A3.9 3.9 0 0 1 10.5 12.9 H9.4" fill="none" stroke="#555555" stroke-width="1.2"/><rect x="4.1" y="8.2" width="7.8" height="1.6" rx=".5" fill="#555555"/></svg>
<span id="t18" class="t" style="left:109.2px;top:220px;letter-spacing:-0.095px;">btn_archive</span>
<svg style="left:88px;top:240px" width="20" height="18" viewBox="0 0 20 18" ><path d="M6.5 5.1 H5.3 A3.9 3.9 0 0 0 5.3 12.9 H6.5" fill="none" stroke="#555555" stroke-width="1.2"/><path d="M9.4 5.1 H10.5 A3.9 3.9 0 0 1 10.5 12.9 H9.4" fill="none" stroke="#555555" stroke-width="1.2"/><rect x="4.1" y="8.2" width="7.8" height="1.6" rx=".5" fill="#555555"/></svg>
<span id="t19" class="t" style="left:109.2px;top:242px;letter-spacing:-0.024px;">btn_code</span>
<svg style="left:88px;top:262px" width="20" height="18" viewBox="0 0 20 18" ><path d="M6.5 5.1 H5.3 A3.9 3.9 0 0 0 5.3 12.9 H6.5" fill="none" stroke="#555555" stroke-width="1.2"/><path d="M9.4 5.1 H10.5 A3.9 3.9 0 0 1 10.5 12.9 H9.4" fill="none" stroke="#555555" stroke-width="1.2"/><rect x="4.1" y="8.2" width="7.8" height="1.6" rx=".5" fill="#555555"/></svg>
<span id="t20" class="t" style="left:109.2px;top:264px;letter-spacing:0.064px;">btn_download</span>
<svg style="left:88px;top:284px" width="20" height="18" viewBox="0 0 20 18" ><path d="M6.5 5.1 H5.3 A3.9 3.9 0 0 0 5.3 12.9 H6.5" fill="none" stroke="#555555" stroke-width="1.2"/><path d="M9.4 5.1 H10.5 A3.9 3.9 0 0 1 10.5 12.9 H9.4" fill="none" stroke="#555555" stroke-width="1.2"/><rect x="4.1" y="8.2" width="7.8" height="1.6" rx=".5" fill="#555555"/></svg>
<span id="t21" class="t" style="left:109.2px;top:286px;letter-spacing:-0.286px;">btn_share</span>
<svg style="left:88px;top:306px" width="20" height="18" viewBox="0 0 20 18" ><path d="M6.5 5.1 H5.3 A3.9 3.9 0 0 0 5.3 12.9 H6.5" fill="none" stroke="#555555" stroke-width="1.2"/><path d="M9.4 5.1 H10.5 A3.9 3.9 0 0 1 10.5 12.9 H9.4" fill="none" stroke="#555555" stroke-width="1.2"/><rect x="4.1" y="8.2" width="7.8" height="1.6" rx=".5" fill="#555555"/></svg>
<span id="t22" class="t" style="left:109.2px;top:308px;letter-spacing:-0.166px;">internet_packages_link</span>
<svg style="left:88px;top:328px" width="20" height="18" viewBox="0 0 20 18" ><path d="M6.5 5.1 H5.3 A3.9 3.9 0 0 0 5.3 12.9 H6.5" fill="none" stroke="#555555" stroke-width="1.2"/><path d="M9.4 5.1 H10.5 A3.9 3.9 0 0 1 10.5 12.9 H9.4" fill="none" stroke="#555555" stroke-width="1.2"/><rect x="4.1" y="8.2" width="7.8" height="1.6" rx=".5" fill="#555555"/></svg>
<span id="t23" class="t" style="left:109.2px;top:330px;letter-spacing:0.027px;">modems_link</span>
<svg style="left:88px;top:350px" width="20" height="18" viewBox="0 0 20 18" ><path d="M6.5 5.1 H5.3 A3.9 3.9 0 0 0 5.3 12.9 H6.5" fill="none" stroke="#555555" stroke-width="1.2"/><path d="M9.4 5.1 H10.5 A3.9 3.9 0 0 1 10.5 12.9 H9.4" fill="none" stroke="#555555" stroke-width="1.2"/><rect x="4.1" y="8.2" width="7.8" height="1.6" rx=".5" fill="#555555"/></svg>
<span id="t24" class="t" style="left:109.2px;top:352px;letter-spacing:0.010px;">my_mobile_application_link</span>
<svg style="left:88px;top:372px" width="20" height="18" viewBox="0 0 20 18" ><path d="M6.5 5.1 H5.3 A3.9 3.9 0 0 0 5.3 12.9 H6.5" fill="none" stroke="#555555" stroke-width="1.2"/><path d="M9.4 5.1 H10.5 A3.9 3.9 0 0 1 10.5 12.9 H9.4" fill="none" stroke="#555555" stroke-width="1.2"/><rect x="4.1" y="8.2" width="7.8" height="1.6" rx=".5" fill="#555555"/></svg>
<span id="t25" class="t" style="left:109.2px;top:374px;letter-spacing:-0.067px;">settings_activation_link</span>
<svg style="left:59.5px;top:400px" width="7" height="10" viewBox="0 0 7 10" ><path d="M0.9 0.6 L5.2 4.6 L0.9 8.6" fill="none" stroke="#a3a3a3" stroke-width="1.5"/></svg>
<svg style="left:72px;top:394px" width="20" height="18" viewBox="0 0 20 18" ><path d="M0.7 16.2 V1.8 H10 V3.8 H18.4 V16.2 Z" fill="#e2e2e2" stroke="#555555" stroke-width="1.2" stroke-linejoin="round"/><path d="M1.3 2.4 H9.4 V4.4 H17.8 V7.3 H1.3 Z" fill="#6cbe45"/></svg>
<span id="t26" class="t" style="left:96.2px;top:396px;letter-spacing:0.077px;">Menu Item</span>
<svg style="left:59.5px;top:422px" width="7" height="10" viewBox="0 0 7 10" ><path d="M0.9 0.6 L5.2 4.6 L0.9 8.6" fill="none" stroke="#a3a3a3" stroke-width="1.5"/></svg>
<svg style="left:72px;top:416px" width="20" height="18" viewBox="0 0 20 18" ><path d="M0.7 16.2 V1.8 H10 V3.8 H18.4 V16.2 Z" fill="#e2e2e2" stroke="#555555" stroke-width="1.2" stroke-linejoin="round"/><path d="M1.3 2.4 H9.4 V4.4 H17.8 V7.3 H1.3 Z" fill="#6cbe45"/></svg>
<span id="t27" class="t" style="left:96.2px;top:418px;letter-spacing:-0.35px;transform:scaleX(0.9875);">Real Subscribers</span>
<svg style="left:43.5px;top:444px" width="7" height="10" viewBox="0 0 7 10" ><path d="M0.9 0.6 L5.2 4.6 L0.9 8.6" fill="none" stroke="#a3a3a3" stroke-width="1.5"/></svg>
<svg style="left:56px;top:438px" width="20" height="18" viewBox="0 0 20 18" ><rect x="0.7" y="4" width="3.6" height="6" fill="#6cbe45" stroke="#555555" stroke-width="1"/><rect x="15.6" y="5.4" width="3" height="5" fill="#6cbe45" stroke="#555555" stroke-width="1"/><path d="M6.4 3 V0.9 H16.2 V9.5" fill="#6cbe45" stroke="#555555" stroke-width="1"/><rect x="4.2" y="2.6" width="10.6" height="7" fill="#f2f2f2" stroke="#555555" stroke-width="1"/><rect x="6" y="5" width="1.4" height="1.4" fill="#555555"/><rect x="8.6" y="5.4" width="4.4" height="1" fill="#555555"/><rect x="0.7" y="9.5" width="17.9" height="7" fill="#e2e2e2" stroke="#555555" stroke-width="1.1"/><rect x="1.3" y="10.1" width="2.2" height="5.8" fill="#cfe6bf"/><rect x="16.6" y="10.1" width="1.4" height="5.8" fill="#cfe6bf"/><rect x="6" y="12.2" width="1.2" height="1.2" fill="#c4c4c4"/><rect x="8.6" y="12.5" width="4.4" height="0.8" fill="#c8c8c8"/></svg>
<span id="t28" class="t" style="left:80.2px;top:440px;letter-spacing:-0.35px;transform:scaleX(0.9772);">Test Suites</span>
<svg style="left:43.5px;top:466px" width="7" height="10" viewBox="0 0 7 10" ><path d="M0.9 0.6 L5.2 4.6 L0.9 8.6" fill="none" stroke="#a3a3a3" stroke-width="1.5"/></svg>
<svg style="left:56px;top:460px" width="20" height="18" viewBox="0 0 20 18" ><rect x="0.7" y="4" width="3.6" height="6" fill="#6cbe45" stroke="#555555" stroke-width="1"/><rect x="15.6" y="5.4" width="3" height="5" fill="#6cbe45" stroke="#555555" stroke-width="1"/><path d="M4.4 3.6 V9.6 H15.4 V3.6" fill="#ececec" stroke="#555555" stroke-width="1"/><path d="M4.6 6.2 Q9.9 9 15.2 6.2" fill="none" stroke="#b5b5b5" stroke-width=".9"/><ellipse cx="9.9" cy="3.4" rx="5.6" ry="2.3" fill="#6cbe45" stroke="#555555" stroke-width=".9"/><rect x="0.7" y="9.5" width="17.9" height="7" fill="#e2e2e2" stroke="#555555" stroke-width="1.1"/><rect x="1.3" y="10.1" width="2.2" height="5.8" fill="#cfe6bf"/><rect x="16.6" y="10.1" width="1.4" height="5.8" fill="#cfe6bf"/><path d="M4.6 11.6 Q9.9 14.4 15.2 11.6" fill="none" stroke="#c6c6c6" stroke-width=".9"/></svg>
<span id="t29" class="t" style="left:80.2px;top:462px;letter-spacing:-0.35px;transform:scaleX(0.9796);">Data Files</span>
<svg style="left:43.5px;top:488px" width="7" height="10" viewBox="0 0 7 10" ><path d="M0.9 0.6 L5.2 4.6 L0.9 8.6" fill="none" stroke="#a3a3a3" stroke-width="1.5"/></svg>
<svg style="left:56px;top:482px" width="20" height="18" viewBox="0 0 20 18" ><rect x="0.7" y="4" width="3.6" height="6" fill="#6cbe45" stroke="#555555" stroke-width="1"/><rect x="15.6" y="5.4" width="3" height="5" fill="#6cbe45" stroke="#555555" stroke-width="1"/><path d="M2.6 10 A7.3 7.3 0 0 1 17.2 10 Z" fill="#6cbe45" stroke="#555555" stroke-width="1"/><path d="M4.9 10 A5 5 0 0 1 14.9 10 Z" fill="#eeeeee" stroke="#8fa88a" stroke-width=".8"/><path d="M6.3 8.2 L9 6.4 L10.4 7.6 L13.4 4.9" fill="none" stroke="#555555" stroke-width=".9"/><rect x="0.7" y="9.5" width="17.9" height="7" fill="#e2e2e2" stroke="#555555" stroke-width="1.1"/><rect x="1.3" y="10.1" width="2.2" height="5.8" fill="#cfe6bf"/><rect x="16.6" y="10.1" width="1.4" height="5.8" fill="#cfe6bf"/><path d="M4.9 10.2 A5 5 0 0 0 14.9 10.2" fill="#e6e6e6" stroke="#c8c8c8" stroke-width=".8"/></svg>
<span id="t30" class="t" style="left:80.2px;top:484px;letter-spacing:-0.022px;">Checkpoints</span>
<svg style="left:43.5px;top:510px" width="7" height="10" viewBox="0 0 7 10" ><path d="M0.9 0.6 L5.2 4.6 L0.9 8.6" fill="none" stroke="#a3a3a3" stroke-width="1.5"/></svg>
<svg style="left:56px;top:504px" width="20" height="18" viewBox="0 0 20 18" ><rect x="0.7" y="4" width="3.6" height="6" fill="#6cbe45" stroke="#555555" stroke-width="1"/><rect x="15.6" y="5.4" width="3" height="5" fill="#6cbe45" stroke="#555555" stroke-width="1"/><rect x="2.6" y="1" width="13.8" height="9" fill="#f4f4f4" stroke="#555555" stroke-width="1"/><rect x="3.1" y="1.5" width="12.8" height="3" fill="#6cbe45"/><rect x="4.4" y="2.6" width="1" height="0.9" fill="#d8f0c8"/><rect x="6.2" y="2.6" width="1" height="0.9" fill="#d8f0c8"/><rect x="8" y="2.6" width="1" height="0.9" fill="#d8f0c8"/><path d="M6 6.5 L7.4 8.4 M9.2 8.6 L10.2 6.4 M12.2 6.5 L13.6 8.4" stroke="#555555" stroke-width=".8" fill="none"/><rect x="0.7" y="9.5" width="17.9" height="7" fill="#e2e2e2" stroke="#555555" stroke-width="1.1"/><rect x="1.3" y="10.1" width="2.2" height="5.8" fill="#cfe6bf"/><rect x="16.6" y="10.1" width="1.4" height="5.8" fill="#cfe6bf"/><path d="M7 11.4 L8.6 13.6 M9.6 14.4 L10.4 11.6 M13 11.4 L11.4 13.6" stroke="#c8c8c8" stroke-width=".8" fill="none"/></svg>
<span id="t31" class="t" style="left:80.2px;top:506px;letter-spacing:-0.261px;">Keywords</span>
<svg style="left:43.5px;top:532px" width="7" height="10" viewBox="0 0 7 10" ><path d="M0.9 0.6 L5.2 4.6 L0.9 8.6" fill="none" stroke="#a3a3a3" stroke-width="1.5"/></svg>
<svg style="left:56px;top:526px" width="20" height="18" viewBox="0 0 20 18" ><path d="M0.7 16.2 V1.8 H10 V3.8 H18.4 V16.2 Z" fill="#e2e2e2" stroke="#555555" stroke-width="1.2" stroke-linejoin="round"/><path d="M1.3 2.4 H9.4 V4.4 H17.8 V7.3 H1.3 Z" fill="#6cbe45"/></svg>
<span id="t32" class="t" style="left:80.2px;top:528px;letter-spacing:-0.35px;transform:scaleX(0.9935);">Test Listeners</span>
<svg style="left:43.5px;top:554px" width="7" height="10" viewBox="0 0 7 10" ><path d="M0.9 0.6 L5.2 4.6 L0.9 8.6" fill="none" stroke="#a3a3a3" stroke-width="1.5"/></svg>
<svg style="left:56px;top:548px" width="20" height="18" viewBox="0 0 20 18" ><rect x="0.7" y="4" width="17.9" height="12.5" fill="#6cbe45" stroke="#555555" stroke-width="1.1"/><path d="M10 1.6 L12.4 4.4 L15.4 0.8 L17.4 4.2 L18 9 H10 Z" fill="#6cbe45" stroke="#555555" stroke-width=".8"/><path d="M9.4 8.8 L11.4 2.2 A6.8 6.8 0 1 0 15.9 10.4 Z" fill="#e8e8e8" stroke="#8a8a8a" stroke-width=".9"/><rect x="0.7" y="9.5" width="17.9" height="7" fill="#cfe6bf" stroke="#555555" stroke-width="1.1" fill-opacity=".85"/><path d="M3 10 A6.6 6.6 0 0 0 15.8 10 Z" fill="#dedede" stroke="#bdbdbd" stroke-width=".7"/></svg>
<span id="t33" class="t" style="left:80.2px;top:550px;letter-spacing:-0.333px;">Reports</span>
<svg style="left:43.5px;top:576px" width="7" height="10" viewBox="0 0 7 10" ><path d="M0.9 0.6 L5.2 4.6 L0.9 8.6" fill="none" stroke="#a3a3a3" stroke-width="1.5"/></svg>
<svg style="left:56px;top:570px" width="20" height="18" viewBox="0 0 20 18" ><path d="M0.7 16.2 V1.8 H10 V3.8 H18.4 V16.2 Z" fill="#e2e2e2" stroke="#555555" stroke-width="1.2" stroke-linejoin="round"/><path d="M1.3 2.4 H9.4 V4.4 H17.8 V7.3 H1.3 Z" fill="#6cbe45"/></svg>
<span id="t34" class="t" style="left:80.2px;top:572px;letter-spacing:0.014px;">Include</span>
<svg style="left:56px;top:592px" width="20" height="18" viewBox="0 0 20 18" ><path d="M9.5 1.4 L17.1 9 L9.5 16.6 L1.9 9 Z" fill="#de4c36" stroke="#de4c36" stroke-width="1" stroke-linejoin="round"/><path d="M7.4 4.2 L9.6 6.4 V12 M9.6 6.6 L12.2 9.2" fill="none" stroke="#fff" stroke-width="1.1"/><circle cx="9.6" cy="6.4" r="1.1" fill="#fff"/><circle cx="9.6" cy="12" r="1.1" fill="#fff"/><circle cx="12.3" cy="9.3" r="1.1" fill="#fff"/></svg>
<span id="t35" class="t" style="left:80.2px;top:594px;letter-spacing:0.152px;">.gitignore</span>
<svg style="left:56px;top:614px" width="20" height="18" viewBox="0 0 20 18" ><path d="M2.5 16.3 V2.3 H9.2 L13.3 6.4 V16.3 Z" fill="#fff" stroke="#8c8c8c" stroke-width="1"/><path d="M13.4 6.6 V16.4 H2.6" fill="none" stroke="#8dc63f" stroke-width="1"/><path d="M9.2 2.3 L13.3 6.4 H9.2 Z" fill="#6b6b6b" stroke="#6b6b6b" stroke-width=".6"/><path d="M4.4 9.4 H10.6 M4.4 11.7 H10.6 M4.4 14 H9" stroke="#6cbe45" stroke-width="1.1"/></svg>
<span id="t36" class="t" style="left:77.6px;top:616px;letter-spacing:-0.103px;">console.properties</span>
<svg style="left:56px;top:636px" width="20" height="18" viewBox="0 0 20 18" ><path d="M2.5 16.3 V2.3 H9.2 L13.3 6.4 V16.3 Z" fill="#fff" stroke="#8c8c8c" stroke-width="1"/><path d="M13.4 6.6 V16.4 H2.6" fill="none" stroke="#8dc63f" stroke-width="1"/><path d="M9.2 2.3 L13.3 6.4 H9.2 Z" fill="#6b6b6b" stroke="#6b6b6b" stroke-width=".6"/><path d="M4.4 9.4 H10.6 M4.4 11.7 H10.6 M4.4 14 H9" stroke="#6cbe45" stroke-width="1.1"/></svg>
<span id="t37" class="t" style="left:77.6px;top:638px;letter-spacing:-0.35px;transform:scaleX(0.9678);">README.md</span>
<svg style="left:56px;top:658px" width="20" height="18" viewBox="0 0 20 18" ><path d="M2.5 16.3 V2.3 H9.2 L13.3 6.4 V16.3 Z" fill="#fff" stroke="#8c8c8c" stroke-width="1"/><path d="M13.4 6.6 V16.4 H2.6" fill="none" stroke="#8dc63f" stroke-width="1"/><path d="M9.2 2.3 L13.3 6.4 H9.2 Z" fill="#6b6b6b" stroke="#6b6b6b" stroke-width=".6"/><path d="M4.4 9.4 H10.6 M4.4 11.7 H10.6 M4.4 14 H9" stroke="#6cbe45" stroke-width="1.1"/></svg>
<span id="t38" class="t" style="left:77.6px;top:660px;letter-spacing:-0.35px;transform:scaleX(0.9980);">Script1673872324157.groovy</span>
</aside>
<main id="editor">
<div style="left:492px;top:58px;width:1395px;height:648px;background:#f0f0f0;border-radius:4px 4px 0 0"></div>
<div style="left:492px;top:57px;width:1395px;height:27px;background:#e8e8e8;border-top:1px solid #cecece;border-left:1px solid #c6c6c6;border-right:1px solid #c6c6c6;border-radius:4px 4px 0 0"></div>
<div style="left:747px;top:58px;width:110px;height:26px;background:#f5f5f5"></div>
<div style="left:492px;top:84px;width:1px;height:622px;background:#c8c8c8"></div>
<div style="left:1886px;top:84px;width:1px;height:622px;background:#c8c8c8"></div>
<div style="left:493px;top:706px;width:1394px;height:1px;background:#c6c6c6"></div>
<div style="left:494px;top:707px;width:1394px;height:1px;background:#dcdcdc"></div>
<svg style="left:497.6px;top:63.7px" width="15" height="15" viewBox="0 0 15 15" ><path d="M7.4 0.6 L9.5 5.2 L14.4 5.8 L10.8 9.2 L11.8 14.2 L7.4 11.7 L3 14.2 L4 9.2 L0.4 5.8 L5.3 5.2 Z" fill="#6cbe45"/></svg>
<span id="t39" class="t" style="left:516.8px;top:64px;letter-spacing:-0.35px;transform:scaleX(0.9943);">Start Page</span>
<svg style="left:600.4px;top:63.6px" width="16" height="16" viewBox="0 0 16 16" ><rect x="3.2" y="0.8" width="11.6" height="14.2" rx="1.2" fill="#f4f4f4" stroke="#555" stroke-width="1.1"/><rect x="1" y="9" width="2.2" height="6" fill="#6cbe45" stroke="#555" stroke-width=".7"/><circle cx="6.3" cy="4.3" r="1" fill="#6cbe45" stroke="#555" stroke-width=".6"/><path d="M8.6 4.3 H12.6" stroke="#555" stroke-width="1"/><circle cx="6.3" cy="8" r="1" fill="#6cbe45" stroke="#555" stroke-width=".6"/><path d="M8.6 8 H12.6" stroke="#555" stroke-width="1"/><circle cx="6.3" cy="11.7" r="1" fill="#6cbe45" stroke="#555" stroke-width=".6"/><path d="M8.6 11.7 H12.6" stroke="#555" stroke-width="1"/></svg>
<span id="t40" class="t" style="left:619.9px;top:64px;letter-spacing:-0.242px;">tc_site_accessibility</span>
<svg style="left:750px;top:64.7px" width="17" height="13" viewBox="0 0 17 13" ><rect x="0.8" y="1" width="15" height="10.6" rx="1.2" fill="#e9e9e9" stroke="#555" stroke-width="1.1"/><rect x="4.4" y="5.6" width="1.8" height="1.6" fill="#666"/><rect x="7.4" y="5.6" width="1.8" height="1.6" fill="#666"/><rect x="10.4" y="5.6" width="1.8" height="1.6" fill="#666"/></svg>
<span id="t41" class="t" style="left:769.6px;top:64px;letter-spacing:-0.095px;">btn_archive</span>
<svg style="left:839px;top:66px" width="12" height="11" viewBox="0 0 12 11" ><path d="M1.4 1.3 L9.8 9.6 M9.8 1.3 L1.4 9.6" stroke="#1a1a1a" stroke-width="1.05" fill="none"/></svg>
<svg style="left:1783px;top:61px" width="18" height="18" viewBox="0 0 18 18" ><circle cx="9" cy="9" r="8" fill="#27a6e5"/><text x="9" y="13.48" text-anchor="middle" font-size="14.0" font-weight="bold" fill="#fff">?</text></svg>
<span id="t42" class="t" style="left:1804.4px;top:63px;letter-spacing:0.028px;">Help</span>
<svg style="left:1842px;top:64px" width="12" height="6" viewBox="0 0 12 6" ><rect x="1.5" y="1.5" width="9" height="3" fill="#fff" stroke="#000" stroke-width="1.2"/></svg>
<svg style="left:1865px;top:64px" width="12" height="12" viewBox="0 0 12 12" ><rect x="1.6" y="1.6" width="9" height="9" fill="none" stroke="#000" stroke-width="1.25"/><rect x="1.6" y="3.4" width="9" height="0.9" fill="#000"/></svg>
<svg style="left:509px;top:97px" width="7" height="5" viewBox="0 0 7 5" ><path d="M0.4 0.4 H6 L3.2 4.6 Z" fill="#7d8590"/></svg>
<span id="t43" class="t b" style="left:525.9px;top:91.4px;letter-spacing:-0.155px;">Settings</span>
<div style="left:543px;top:124px;width:621px;height:100px;border:1px solid #dcdcdc"></div>
<div style="left:549px;top:118px;width:111px;height:14px;background:#f0f0f0"></div>
<span id="t44" class="t" style="left:552.2px;top:118px;letter-spacing:-0.148px;">Have parent object?</span>
<svg style="left:550.5px;top:139.8px" width="14" height="14" viewBox="0 0 14 14" ><circle cx="7" cy="7" r="6" fill="#fff" stroke="#333" stroke-width="1.1"/><circle cx="7" cy="7" r="3.4" fill="#333"/></svg>
<span id="t45" class="t" style="left:567.7px;top:140.3px;letter-spacing:-0.122px;">No</span>
<svg style="left:550.5px;top:166.5px" width="14" height="14" viewBox="0 0 14 14" ><circle cx="7" cy="7" r="6" fill="#fff" stroke="#333" stroke-width="1.1"/></svg>
<span id="t46" class="t" style="left:567.7px;top:167px;letter-spacing:-0.133px;">Parent iframe</span>
<svg style="left:550.5px;top:196.5px" width="14" height="14" viewBox="0 0 14 14" ><circle cx="7" cy="7" r="6" fill="#fff" stroke="#333" stroke-width="1.1"/></svg>
<span id="t47" class="t" style="left:567.7px;top:197px;letter-spacing:-0.258px;">Shadow Root Parent</span>
<div style="left:684px;top:162px;width:408px;height:25px;background:#f0f0f0;border:1px solid #a8acb2;box-shadow:inset 0 0 0 1px #fafafa"></div>
<div style="left:684px;top:192px;width:408px;height:25px;background:#f0f0f0;border:1px solid #a8acb2;box-shadow:inset 0 0 0 1px #fafafa"></div>
<div style="left:1098px;top:163px;width:57px;height:23px;background:#cfcfcf;border:1px solid #c2c2c2"></div>
<span id="t48" class="t dis" style="left:1104px;top:167.6px;letter-spacing:-0.35px;transform:scaleX(0.9666);">Browse...</span>
<div style="left:1098px;top:193px;width:57px;height:23px;background:#cfcfcf;border:1px solid #c2c2c2"></div>
<span id="t49" class="t dis" style="left:1104px;top:197.6px;letter-spacing:-0.35px;transform:scaleX(0.9666);">Browse...</span>
<span id="t50" class="t" style="left:503px;top:245.60000000000002px;letter-spacing:-0.027px;">Selection Method</span>
<svg style="left:600.6px;top:244.6px" width="17" height="17" viewBox="0 0 17 17" ><circle cx="8.5" cy="8.4" r="8" fill="#27a6e5"/><text x="8.5" y="12.88" text-anchor="middle" font-size="14.0" font-weight="bold" fill="#fff">?</text></svg>
<svg style="left:631.4px;top:245.5px" width="14" height="14" viewBox="0 0 14 14" ><circle cx="7" cy="7" r="6" fill="#fff" stroke="#333" stroke-width="1.1"/></svg>
<span id="t51" class="t" style="left:648px;top:246px;letter-spacing:-0.35px;transform:scaleX(0.9886);">XPath</span>
<svg style="left:688.5px;top:245.5px" width="14" height="14" viewBox="0 0 14 14" ><circle cx="7" cy="7" r="6" fill="#fff" stroke="#333" stroke-width="1.1"/><circle cx="7" cy="7" r="3.4" fill="#333"/></svg>
<span id="t52" class="t" style="left:705.2px;top:246px;letter-spacing:0.070px;">Attributes</span>
<svg style="left:766.7px;top:245.5px" width="14" height="14" viewBox="0 0 14 14" ><circle cx="7" cy="7" r="6" fill="#fff" stroke="#333" stroke-width="1.1"/></svg>
<span id="t53" class="t" style="left:783.4px;top:246px;letter-spacing:-0.35px;transform:scaleX(0.8292);">CSS</span>
<svg style="left:812.6px;top:245.5px" width="14" height="14" viewBox="0 0 14 14" ><circle cx="7" cy="7" r="6" fill="#fff" stroke="#333" stroke-width="1.1"/></svg>
<span id="t54" class="t" style="left:829.3px;top:246px;letter-spacing:-0.152px;">Image</span>
<svg style="left:871.6px;top:245.5px" width="14" height="14" viewBox="0 0 14 14" ><circle cx="7" cy="7" r="6" fill="#fff" stroke="#333" stroke-width="1.1"/></svg>
<span id="t55" class="t" style="left:888.2px;top:246px;letter-spacing:-0.121px;">Smart Locator</span>
<span id="t56" class="t b" style="left:503px;top:292px;letter-spacing:-0.194px;">Selected Locator</span>
<div style="left:503px;top:311px;width:1373px;height:104px;background:#f0f0f0;border:1px solid #a0a4aa"></div>
<div style="left:505px;top:313px;width:1352px;height:100px;background:#c0c0c0"></div>
<div style="left:504px;top:312px;width:1371px;height:1px;background:#fff"></div>
<div style="left:504px;top:412px;width:1354px;height:2px;background:#fff"></div>
<div style="left:504px;top:312px;width:1px;height:102px;background:#fff"></div>
<svg style="left:1860px;top:318px" width="11" height="8" viewBox="0 0 11 8" ><path d="M1 6.4 L5.4 2 L9.8 6.4" fill="none" stroke="#b4b4b4" stroke-width="1.6"/></svg>
<svg style="left:1860px;top:400px" width="11" height="8" viewBox="0 0 11 8" ><path d="M1 1.6 L5.4 6 L9.8 1.6" fill="none" stroke="#b4b4b4" stroke-width="1.6"/></svg>
<span id="t57" class="t" style="left:506.7px;top:314.2px;letter-spacing:0.264px;">//*[@href = '/video' and (text() = '</span>
<span id="t58" class="t ar" style="left:693.1px;top:314.2px;font-size:11.42px;">آرشیو</span>
<span id="t59" class="t" style="left:723.2px;top:314.2px;letter-spacing:0.126px;">' or . = '</span>
<span id="t60" class="t ar" style="left:768.9px;top:314.2px;font-size:11.54px;">آرشیو</span>
<span id="t61" class="t" style="left:799.3px;top:314.2px;letter-spacing:0.35px;transform:scaleX(1.0211);">')]</span>
<span id="t62" class="t b" style="left:503px;top:431px;letter-spacing:-0.188px;">Object's Properties</span>
<svg style="left:506px;top:453.9px" width="15" height="15" viewBox="0 0 15 15" ><rect x="0.9" y="0.9" width="13.4" height="13.4" rx="2.6" fill="#e4e4e4" stroke="#b6babf" stroke-width="1.2"/><path d="M7.6 3.8 V11.4 M3.8 7.6 H11.4" stroke="#a2a6ab" stroke-width="1"/></svg>
<span id="t63" class="t" style="left:526px;top:453.7px;letter-spacing:0.047px;">Add</span>
<svg style="left:560px;top:453px" width="14" height="16" viewBox="0 0 14 16" ><path d="M5.4 1.7 V0.9 H9.6 V1.7" fill="none" stroke="#8a9098" stroke-width="1"/><rect x="1.3" y="1.7" width="11.3" height="2.6" fill="#f27488"/><path d="M1.3 1.7 H12.6" stroke="#98878c" stroke-width=".7"/><path d="M2.4 4.4 V15.3 H11.5 V4.4" fill="#f3f3f3" stroke="#868c94" stroke-width="1.1"/><path d="M5.4 6.6 V13.4 M8.6 6.6 V13.4" stroke="#868c94" stroke-width="1.1"/></svg>
<span id="t64" class="t" style="left:579px;top:453.7px;letter-spacing:-0.281px;">Delete</span>
<svg style="left:622px;top:453px" width="18" height="16" viewBox="0 0 18 16" ><path d="M0.9 3.4 H4.2 M0.9 6.4 H4.2 M0.9 9.4 H4.2 M0.9 12.4 H4.2" stroke="#9ca2aa" stroke-width="1"/><g transform="translate(4.6,0)"><path d="M5.4 1.7 V0.9 H9.6 V1.7" fill="none" stroke="#8a9098" stroke-width="1"/><rect x="1.3" y="1.7" width="11.3" height="2.6" fill="#f27488"/><path d="M1.3 1.7 H12.6" stroke="#98878c" stroke-width=".7"/><path d="M2.4 4.4 V15.3 H11.5 V4.4" fill="#f3f3f3" stroke="#868c94" stroke-width="1.1"/><path d="M5.4 6.6 V13.4 M8.6 6.6 V13.4" stroke="#868c94" stroke-width="1.1"/></g></svg>
<span id="t65" class="t" style="left:643.2px;top:453.7px;letter-spacing:-0.318px;">Clear</span>
<div style="left:503px;top:477px;width:1373px;height:224px;background:#fff;border:1px solid #828790"></div>
<div style="left:605px;top:478px;width:1px;height:222px;background:#ededed"></div>
<div style="left:605px;top:478px;width:1px;height:25px;background:#fff"></div>
<div style="left:604px;top:480px;width:1px;height:23px;background:#e2e2e2"></div>
<div style="left:755px;top:478px;width:1px;height:222px;background:#ededed"></div>
<div style="left:755px;top:478px;width:1px;height:25px;background:#fff"></div>
<div style="left:754px;top:480px;width:1px;height:23px;background:#e2e2e2"></div>
<div style="left:1105px;top:478px;width:1px;height:222px;background:#ededed"></div>
<div style="left:1105px;top:478px;width:1px;height:25px;background:#fff"></div>
<div style="left:1104px;top:480px;width:1px;height:23px;background:#e2e2e2"></div>
<div style="left:1255px;top:478px;width:1px;height:222px;background:#ededed"></div>
<div style="left:1255px;top:478px;width:1px;height:25px;background:#fff"></div>
<div style="left:1254px;top:480px;width:1px;height:23px;background:#e2e2e2"></div>
<div style="left:504px;top:521px;width:1371px;height:1px;background:#ededed"></div>
<div style="left:504px;top:540px;width:1371px;height:1px;background:#ededed"></div>
<div style="left:504px;top:559px;width:1371px;height:1px;background:#ededed"></div>
<div style="left:504px;top:578px;width:1371px;height:1px;background:#ededed"></div>
<div style="left:504px;top:597px;width:1371px;height:1px;background:#ededed"></div>
<div style="left:504px;top:616px;width:1371px;height:1px;background:#ededed"></div>
<div style="left:504px;top:635px;width:1371px;height:1px;background:#ededed"></div>
<div style="left:504px;top:654px;width:1371px;height:1px;background:#ededed"></div>
<div style="left:504px;top:673px;width:1371px;height:1px;background:#ededed"></div>
<div style="left:504px;top:692px;width:1371px;height:1px;background:#ededed"></div>
<span id="t66" class="t" style="left:511.3px;top:483.6px;letter-spacing:-0.079px;">Name</span>
<span id="t67" class="t" style="left:611.3px;top:483.6px;letter-spacing:0.222px;">Condition</span>
<span id="t68" class="t" style="left:761px;top:483.6px;letter-spacing:-0.263px;">Value</span>
<span id="t69" class="t" style="left:1139.4px;top:483.6px;letter-spacing:-0.113px;">Detect object by?</span>
<svg style="left:1113.6px;top:485.5px" width="11" height="11" viewBox="0 0 11 11" ><rect x="0.5" y="0.5" width="9.7" height="9.7" rx="1.4" fill="#fff" stroke="#a3a7ad" stroke-width="1"/></svg>
<span id="t70" class="t" style="left:511.3px;top:505.6px;letter-spacing:-0.262px;">tag</span>
<span id="t71" class="t" style="left:611.3px;top:505.6px;letter-spacing:-0.262px;">equals</span>
<span id="t72" class="t" style="left:761px;top:505.6px;letter-spacing:-0.188px;">a</span>
<svg style="left:1113.6px;top:505.5px" width="11" height="11" viewBox="0 0 11 11" ><rect x="0.5" y="0.5" width="9.7" height="9.7" rx="1.4" fill="#fff" stroke="#a3a7ad" stroke-width="1"/></svg>
<span id="t73" class="t" style="left:511.3px;top:524.6px;letter-spacing:-0.047px;">href</span>
<span id="t74" class="t" style="left:611.3px;top:524.6px;letter-spacing:-0.262px;">equals</span>
<span id="t75" class="t" style="left:761px;top:524.6px;letter-spacing:0.311px;">/video</span>
<svg style="left:1113.6px;top:524.5px" width="11" height="11" viewBox="0 0 11 11" ><rect x="0.5" y="0.5" width="9.7" height="9.7" rx="1.4" fill="#fff" stroke="#a3a7ad" stroke-width="1"/><path d="M2.3 5.4 L4.4 7.5 L8.3 2.9" fill="none" stroke="#8c8c8c" stroke-width="1.1"/></svg>
<span id="t76" class="t" style="left:511.3px;top:543.6px;letter-spacing:-0.35px;transform:scaleX(0.9651);">class</span>
<span id="t77" class="t" style="left:611.3px;top:543.6px;letter-spacing:-0.262px;">equals</span>
<span id="t78" class="t" style="left:761px;top:543.6px;letter-spacing:0.205px;">video-fn-btn video-archive</span>
<svg style="left:1113.6px;top:543.5px" width="11" height="11" viewBox="0 0 11 11" ><rect x="0.5" y="0.5" width="9.7" height="9.7" rx="1.4" fill="#fff" stroke="#a3a7ad" stroke-width="1"/></svg>
<span id="t79" class="t" style="left:511.3px;top:562.6px;letter-spacing:-0.011px;">text</span>
<span id="t80" class="t" style="left:611.3px;top:562.6px;letter-spacing:-0.262px;">equals</span>
<span id="t81" class="t ar" style="left:767.3px;top:562.6px;font-size:11.25px;">آرشیو</span>
<svg style="left:1113.6px;top:562.5px" width="11" height="11" viewBox="0 0 11 11" ><rect x="0.5" y="0.5" width="9.7" height="9.7" rx="1.4" fill="#fff" stroke="#a3a7ad" stroke-width="1"/><path d="M2.3 5.4 L4.4 7.5 L8.3 2.9" fill="none" stroke="#8c8c8c" stroke-width="1.1"/></svg>
<span id="t82" class="t" style="left:511.3px;top:581.6px;letter-spacing:-0.012px;">xpath</span>
<span id="t83" class="t" style="left:611.3px;top:581.6px;letter-spacing:-0.262px;">equals</span>
<span id="t84" class="t" style="left:761px;top:581.6px;letter-spacing:-0.242px;">id("portlet_embedContentVideo_INSTANCE_WCp6e08vZPB5")...</span>
<svg style="left:1113.6px;top:581.5px" width="11" height="11" viewBox="0 0 11 11" ><rect x="0.5" y="0.5" width="9.7" height="9.7" rx="1.4" fill="#fff" stroke="#a3a7ad" stroke-width="1"/></svg>
</main>
<section id="problems-view">
<div style="left:492px;top:711px;width:1395px;height:278px;background:#f5f5f5;border-radius:4px 4px 0 0"></div>
<div style="left:572px;top:711px;width:1315px;height:27px;background:#f4f4f4;border-top:1px solid #dadada;border-left:1px solid #e4e4e4;border-bottom:1px solid #e6e6e6;border-right:1px solid #d8d8d8;border-radius:0 4px 0 0"></div>
<div style="left:492px;top:711px;width:81px;height:1px;background:#e9e9e9"></div>
<div style="left:1791px;top:713px;width:92px;height:22px;background:#e8e8e8"></div>
<div style="left:492px;top:738px;width:1px;height:251px;background:#c8c8c8"></div>
<div style="left:1886px;top:738px;width:1px;height:251px;background:#c8c8c8"></div>
<div style="left:493px;top:988px;width:1394px;height:1px;background:#c6c6c6"></div>
<div style="left:494px;top:989px;width:1394px;height:1px;background:#dcdcdc"></div>
<svg style="left:496px;top:716px" width="16" height="16" viewBox="0 0 16 16" ><defs><linearGradient id="prb" x1="0" y1="0" x2="0" y2="1"><stop offset="0" stop-color="#a49c62"/><stop offset="1" stop-color="#55638c"/></linearGradient><linearGradient id="pro" x1="0" y1="0" x2="0" y2="1"><stop offset="0" stop-color="#f59a1c"/><stop offset=".55" stop-color="#fdd23c"/><stop offset="1" stop-color="#f29018"/></linearGradient></defs><path d="M1.5 1.5 H11.6 Q15.4 3.2 14.4 6.4 Q13 9.8 12.7 11.2 Q13.2 13.6 15 15.4 H1.5 Z" fill="#e2f3fc" stroke="url(#prb)" stroke-width="1"/><path d="M2 8.3 H13.2 M10.5 2 V15" stroke="#a9b9e2" stroke-width="1"/><path d="M1.5 15.4 H15" stroke="#55638c" stroke-width="1.1"/><circle cx="6.4" cy="5.4" r="2.5" fill="#e8323c"/><path d="M3.9 15 V12.6 Q3.9 10.2 6.5 10.2 Q9.1 10.2 9.1 12.6 V15 Z" fill="url(#pro)"/></svg>
<span id="t85" class="t" style="left:517.2px;top:718.4px;letter-spacing:-0.173px;">Problems</span>
<svg style="left:578px;top:718px" width="15" height="14" viewBox="0 0 15 14" ><rect x="1.3" y="1" width="12" height="9.4" rx="1.2" fill="#f2f6fb" stroke="#3560ac" stroke-width="1.9"/><path d="M3.8 4.2 H8.6 M3.8 6.6 H10.4" stroke="#5a6f98" stroke-width="1"/><path d="M5.4 10.8 H9.2 V12 H5.4 Z" fill="#3a63ad"/><path d="M2.6 12.6 H12 " stroke="#3a63ad" stroke-width="1.4"/></svg>
<span id="t86" class="t" style="left:597px;top:718.4px;letter-spacing:-0.283px;">Event Log</span>
<svg style="left:660px;top:718px" width="15" height="14" viewBox="0 0 15 14" ><rect x="1.3" y="1" width="12" height="9.4" rx="1.2" fill="#f2f6fb" stroke="#3560ac" stroke-width="1.9"/><path d="M3.8 4.2 H8.6 M3.8 6.6 H10.4" stroke="#5a6f98" stroke-width="1"/><path d="M5.4 10.8 H9.2 V12 H5.4 Z" fill="#3a63ad"/><path d="M2.6 12.6 H12 " stroke="#3a63ad" stroke-width="1.4"/></svg>
<span id="t87" class="t" style="left:678.6px;top:718.4px;letter-spacing:-0.133px;">Console</span>
<svg style="left:734px;top:717px" width="14" height="16" viewBox="0 0 14 16" ><rect x="0.7" y="0.6" width="12" height="14.8" fill="#fcfcfc" stroke="#8a8a8a" stroke-width="1"/><text x="1.9" y="5.9" font-size="4.9" font-weight="bold" fill="#1a9be8" textLength="9.6" lengthAdjust="spacingAndGlyphs">LOG</text><path d="M2.4 8.4 H5.8 M7.4 8.4 H11 M2.4 10.7 H5.8 M7.4 10.7 H11 M2.4 13 H5.8 M7.4 13 H11" stroke="#7d7d7d" stroke-width="1.1"/></svg>
<span id="t88" class="t" style="left:752.2px;top:718.4px;letter-spacing:-0.213px;">Log Viewer</span>
<svg style="left:820px;top:717px" width="16" height="16" viewBox="0 0 16 16" ><defs><linearGradient id="shs" x1="0" y1="0" x2="1" y2="1"><stop offset="0" stop-color="#d660b0"/><stop offset=".55" stop-color="#a064d4"/><stop offset="1" stop-color="#6f74ec"/></linearGradient></defs><rect x="0.3" y="0.2" width="15.4" height="15.6" rx="3.2" fill="url(#shs)"/><path d="M4.6 3 L11.8 11 M12 3.2 L6.8 9.4" stroke="#f0e2f8" stroke-width="1.3" fill="none" stroke-linecap="round"/><text x="2.6" y="10.9" font-size="2.5" font-weight="bold" fill="#f3e3f8">SELF</text><text x="2.6" y="13.6" font-size="2.5" font-weight="bold" fill="#f3e3f8">HEALING</text></svg>
<span id="t89" class="t" style="left:839.6px;top:718.4px;letter-spacing:-0.051px;">Self-healing Insights</span>
<svg style="left:1794.6px;top:716px" width="16" height="17" viewBox="0 0 16 17" ><defs><linearGradient id="flt" x1="0" y1="0" x2="0" y2="1"><stop offset="0" stop-color="#a9d4f7"/><stop offset=".5" stop-color="#d9ecfb"/><stop offset="1" stop-color="#eef6fd"/></linearGradient></defs><path d="M0.7 1.2 Q7 2 13.5 1.2 L9.5 6.8 V13.4 L4.9 15.8 V6.8 Z" fill="url(#flt)" stroke="#7c9fd2" stroke-width="1" stroke-linejoin="round"/></svg>
<svg style="left:1821px;top:716px" width="9" height="17" viewBox="0 0 9 17" ><circle cx="4.4" cy="3.3" r="2" fill="#f4f4f4" stroke="#6e6e6e" stroke-width=".9"/><circle cx="4.4" cy="8.3" r="2" fill="#f4f4f4" stroke="#6e6e6e" stroke-width=".9"/><circle cx="4.4" cy="13.3" r="2" fill="#f4f4f4" stroke="#6e6e6e" stroke-width=".9"/></svg>
<svg style="left:1842px;top:718px" width="12" height="6" viewBox="0 0 12 6" ><rect x="1.5" y="1.5" width="9" height="3" fill="#fff" stroke="#000" stroke-width="1.2"/></svg>
<svg style="left:1865px;top:718px" width="12" height="12" viewBox="0 0 12 12" ><rect x="1.6" y="1.6" width="9" height="9" fill="none" stroke="#000" stroke-width="1.25"/><rect x="1.6" y="3.4" width="9" height="0.9" fill="#000"/></svg>
<span id="t90" class="t" style="left:493.4px;top:739.2px;letter-spacing:-0.155px;">0 items</span>
<div style="left:493px;top:753px;width:1393px;height:235px;background:#fff;border-top:1px solid #8a8a8a"></div>
<div style="left:493px;top:779px;width:299px;height:209px;background:#f5f5f5"></div>
<div style="left:493px;top:796px;width:1393px;height:1px;background:#e6e6e6"></div>
<div style="left:493px;top:814px;width:1393px;height:1px;background:#e6e6e6"></div>
<div style="left:493px;top:832px;width:1393px;height:1px;background:#e6e6e6"></div>
<div style="left:493px;top:850px;width:1393px;height:1px;background:#e6e6e6"></div>
<div style="left:493px;top:868px;width:1393px;height:1px;background:#e6e6e6"></div>
<div style="left:493px;top:886px;width:1393px;height:1px;background:#e6e6e6"></div>
<div style="left:493px;top:904px;width:1393px;height:1px;background:#e6e6e6"></div>
<div style="left:493px;top:922px;width:1393px;height:1px;background:#e6e6e6"></div>
<div style="left:493px;top:940px;width:1393px;height:1px;background:#e6e6e6"></div>
<div style="left:493px;top:958px;width:1393px;height:1px;background:#e6e6e6"></div>
<div style="left:493px;top:976px;width:1393px;height:1px;background:#e6e6e6"></div>
<div style="left:493px;top:994px;width:1393px;height:1px;background:#e6e6e6"></div>
<div style="left:792px;top:754px;width:1px;height:234px;background:#e8e8e8"></div>
<div style="left:882px;top:754px;width:1px;height:234px;background:#e8e8e8"></div>
<div style="left:1002px;top:754px;width:1px;height:234px;background:#e8e8e8"></div>
<div style="left:1092px;top:754px;width:1px;height:234px;background:#e8e8e8"></div>
<div style="left:1182px;top:754px;width:1px;height:234px;background:#e8e8e8"></div>
<span id="t91" class="t" style="left:499.2px;top:760.2px;letter-spacing:-0.057px;">Description</span>
<span id="t92" class="t" style="left:799.5px;top:760.2px;letter-spacing:-0.35px;transform:scaleX(0.9823);">Resource</span>
<span id="t93" class="t" style="left:889.4px;top:760.2px;letter-spacing:-0.322px;">Path</span>
<span id="t94" class="t" style="left:1009.5px;top:760.2px;letter-spacing:0.016px;">Location</span>
<span id="t95" class="t" style="left:1099.6px;top:760.2px;letter-spacing:-0.35px;transform:scaleX(0.9669);">Type</span>
<svg style="left:639px;top:754.8px" width="9" height="6" viewBox="0 0 9 6" ><path d="M0.8 4.8 L4.4 1.2 L8 4.8" fill="none" stroke="#555" stroke-width="1"/></svg>
</section>
</body>
</html>
